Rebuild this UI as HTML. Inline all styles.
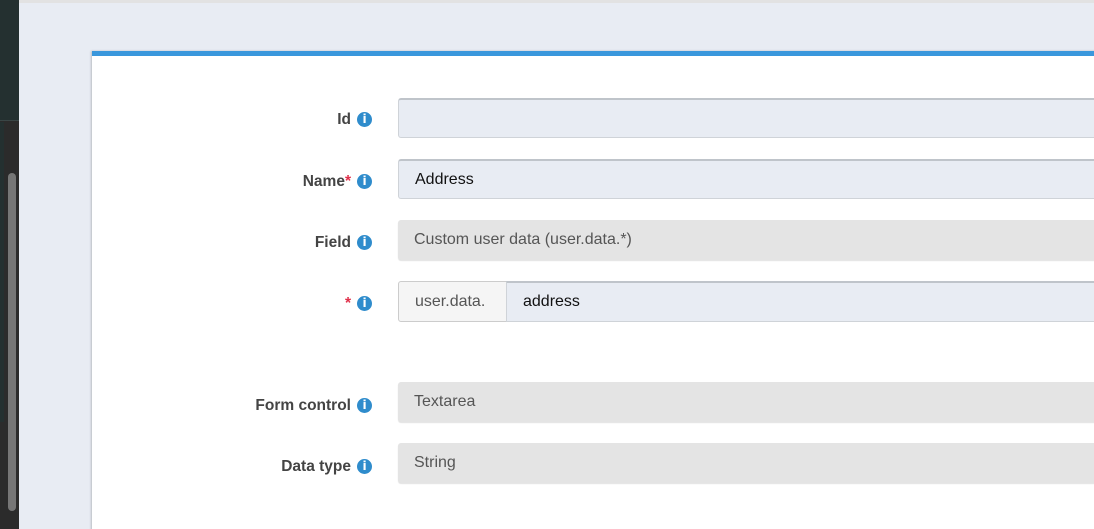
<!DOCTYPE html>
<html><head><meta charset="utf-8"><style>
*{box-sizing:border-box;margin:0;padding:0}
html,body{width:1094px;height:529px;overflow:hidden;background:#e8ecf3;font-family:"Liberation Sans",sans-serif;position:relative}
.side{position:absolute;left:0;top:0;width:19px;height:529px;background:#2b2b2b}
.side .top{position:absolute;left:0;top:0;width:19px;height:121px;background:#243030;border-bottom:1px solid #3a4646}
.side .mid{position:absolute;left:0;top:122px;width:4px;height:300px;background:#243030}
.side .bar{position:absolute;left:8px;top:173px;width:8px;height:338px;border-radius:4px;background:#767676}
.topline{position:absolute;left:19px;top:0;right:0;height:3px;background:#e2e2e2}
.card{position:absolute;left:92px;top:51px;width:1010px;height:490px;background:#fff;border-top:5px solid #3a97dc;box-shadow:-1px 0 2px rgba(0,0,0,.2)}
.lbl{position:absolute;right:calc(1094px - 351px);font-size:15.5px;font-weight:bold;color:#444;text-align:right;white-space:nowrap;line-height:18px}
.req{color:#e0304a}
.ic{position:absolute;left:357px;width:15px;height:15px;border-radius:50%;background:#2f8ccc;color:#fff;font:bold 12px/15px "DejaVu Sans",sans-serif;text-align:center}
.in{position:absolute;left:398px;width:700px;height:40px;border-radius:3px;font-size:16px;padding-left:16px;line-height:40px;color:#111}
.ed{background:#e8ecf3;border:1px solid #cfd3d8;border-top:2px solid #bfc4ca;line-height:37px}
.ro{background:#e4e4e4;color:#555;box-shadow:0 1px 1px rgba(0,0,0,.12)}
.add{position:absolute;left:398px;top:281px;width:109px;height:41px;background:#f5f5f5;border:1px solid #ccc;border-radius:3px 0 0 3px;color:#555;font-size:16px;line-height:39px;padding-left:16px}
</style></head><body>
<div class="side"><div class="top"></div><div class="mid"></div><div class="bar"></div></div>
<div class="topline"></div>
<div class="card"></div>

<div class="lbl" style="top:111px">Id</div><div class="ic" style="top:112px">i</div>
<div class="in ed" style="top:98px"></div>

<div class="lbl" style="top:173px">Name<span class="req">*</span></div><div class="ic" style="top:174px">i</div>
<div class="in ed" style="top:159px">Address</div>

<div class="lbl" style="top:234px">Field</div><div class="ic" style="top:235px">i</div>
<div class="in ro" style="top:220px">Custom user data (user.data.*)</div>

<div class="lbl" style="top:295px"><span class="req">*</span></div><div class="ic" style="top:296px">i</div>
<div class="add">user.data.</div>
<div class="in ed" style="top:281px;left:506px;border-radius:0;height:41px">address</div>

<div class="lbl" style="top:397px">Form control</div><div class="ic" style="top:398px">i</div>
<div class="in ro" style="top:382px">Textarea</div>

<div class="lbl" style="top:458px">Data type</div><div class="ic" style="top:459px">i</div>
<div class="in ro" style="top:443px">String</div>
</body></html>
